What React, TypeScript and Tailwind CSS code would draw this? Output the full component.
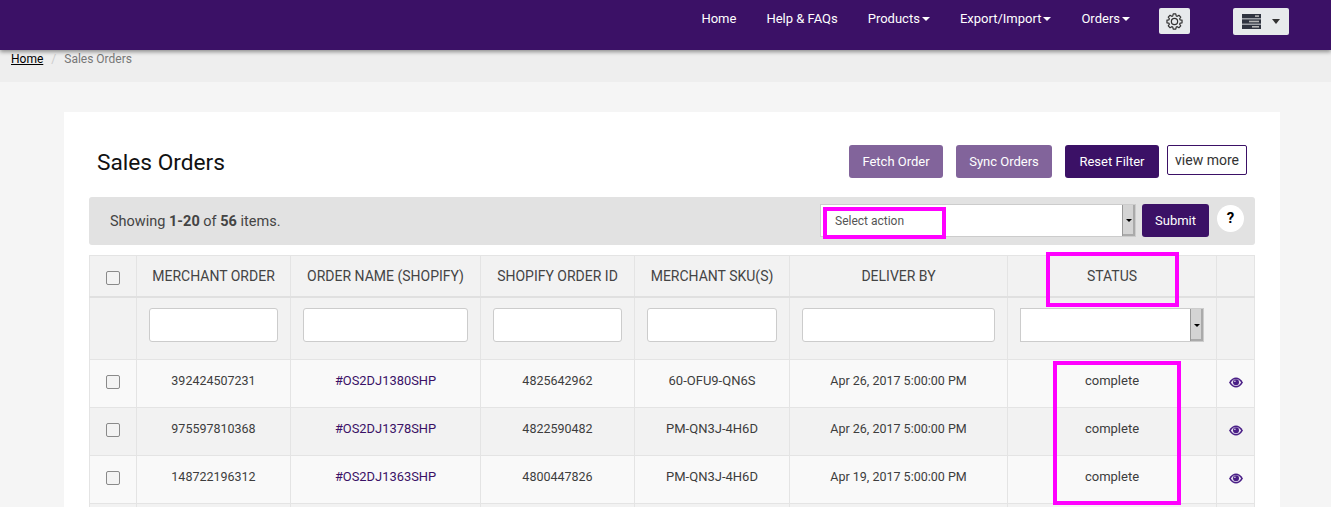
const orders = [
  { merchant: "392424507231", name: "#OS2DJ1380SHP", shopify: "4825642962", sku: "60-OFU9-QN6S", deliver: "Apr 26, 2017 5:00:00 PM" },
  { merchant: "975597810368", name: "#OS2DJ1378SHP", shopify: "4822590482", sku: "PM-QN3J-4H6D", deliver: "Apr 26, 2017 5:00:00 PM" },
  { merchant: "148722196312", name: "#OS2DJ1363SHP", shopify: "4800447826", sku: "PM-QN3J-4H6D", deliver: "Apr 19, 2017 5:00:00 PM" },
];

const headers = ["MERCHANT ORDER", "ORDER NAME (SHOPIFY)", "SHOPIFY ORDER ID", "MERCHANT SKU(S)", "DELIVER BY"];

function Caret() {
  return <span className="ml-[2px] inline-block h-0 w-0 border-x-4 border-t-4 border-x-transparent border-t-white align-middle" />;
}

function Checkbox() {
  return <span className="mx-auto block h-[14px] w-[14px] rounded-[2px] border border-[#8a8a8a] bg-[#f3f3f3]" />;
}

function SelectArrow() {
  return (
    <span className="flex h-full w-[13px] items-center justify-center border-l border-[#999] bg-[#d4d4d4] shadow-[inset_-2px_-2px_0_#aaa]">
      <span className="h-0 w-0 border-x-[3px] border-t-[3px] border-x-transparent border-t-black" />
    </span>
  );
}

function GearIcon() {
  // 8 tooth cog outline
  const pts: string[] = [];
  for (let i = 0; i < 8; i++) {
    const a = (i * Math.PI) / 4;
    for (const [r, d] of [[8.2, -0.3], [10.8, -0.17], [10.8, 0.17], [8.2, 0.3]]) {
      pts.push(`${(12 + r * Math.sin(a + d)).toFixed(2)},${(12 - r * Math.cos(a + d)).toFixed(2)}`);
    }
  }
  return (
    <svg width="17" height="17" viewBox="0 0 24 24" fill="none" stroke="#333" strokeWidth="1.7" strokeLinejoin="round">
      <polygon points={pts.join(" ")} />
      <circle cx="12" cy="12" r="4.4" />
    </svg>
  );
}

function ServerIcon() {
  return (
    <svg width="19" height="15" viewBox="0 0 19 15">
      <rect x="0" y="0" width="19" height="4.4" fill="#2f3440" />
      <rect x="0" y="5.3" width="19" height="4.4" fill="#2f3440" />
      <rect x="0" y="10.6" width="19" height="4.4" fill="#2f3440" />
      <rect x="13" y="1.3" width="4" height="1.6" fill="#b5b5b5" />
      <rect x="7" y="6.7" width="10" height="1.6" fill="#b5b5b5" />
      <rect x="10" y="12" width="7" height="1.6" fill="#b5b5b5" />
    </svg>
  );
}

function EyeIcon() {
  return (
    <svg width="14" height="11" viewBox="0 0 14 11" className="mx-auto block">
      <path d="M0 5.5C2 2 4.5.5 7 .5s5 1.5 7 5c-2 3.5-4.5 5-7 5s-5-1.5-7-5z" fill="#4a1f86" />
      <path d="M1.8 5.5C3.3 3.1 5 2 7 2s3.7 1.1 5.2 3.5C10.7 7.9 9 9 7 9S3.3 7.9 1.8 5.5z" fill="#e8e2f0" />
      <circle cx="7" cy="5.3" r="3" fill="#4a1f86" />
      <circle cx="5.9" cy="4.3" r="0.8" fill="#e8e2f0" />
    </svg>
  );
}

export default function App() {
  return (
    <div className="relative h-screen overflow-hidden bg-[#f5f5f5] font-['Roboto',sans-serif] text-[13px] text-[#3d3d3d]">
      {/* Top navigation */}
      <nav className="relative z-10 flex h-[50px] items-start justify-end bg-[#3b1166] pr-[42px] text-white shadow-[0_2px_4px_rgba(0,0,0,0.4)]">
        <div className="flex h-[37px] items-center gap-[30px]">
          <a>Home</a>
          <a>Help &amp; FAQs</a>
          <a>Products<Caret /></a>
          <a>Export/Import<Caret /></a>
          <a>Orders<Caret /></a>
        </div>
        <button className="mt-2 ml-[29px] flex h-[26px] w-[31px] items-center justify-center rounded-[2px] bg-[#e7eaec]">
          <GearIcon />
        </button>
        <button className="mt-2 ml-[43px] flex h-[27px] w-[56px] items-center gap-[11px] rounded-[2px] bg-[#e7eaec] pl-[9px]">
          <ServerIcon />
          <span className="h-0 w-0 border-x-[4px] border-t-[5px] border-x-transparent border-t-[#333]" />
        </button>
      </nav>

      {/* Breadcrumb */}
      <div className="flex h-[32px] items-start bg-[#eeeeee] pt-[1px] pl-[11px] text-[12px] leading-[17px]">
        <a className="text-black underline">Home</a>
        <span className="mx-[8px] text-[#ccc]">/</span>
        <span className="text-[#777]">Sales Orders</span>
      </div>

      {/* Card */}
      <main className="mx-[64px] mt-[30px] w-[1216px] bg-white px-[25px]">
        <div className="flex h-[85px] items-start justify-between pt-[33px]">
          <h1 className="pt-[1px] pl-2 text-[22.7px] leading-[34px] text-[#111]">Sales Orders</h1>
          <div className="flex items-start pr-2">
            <button className="h-[33px] w-[94px] rounded-[3px] bg-[#82649b] text-white">Fetch Order</button>
            <button className="ml-[13px] h-[33px] w-[96px] rounded-[3px] bg-[#82649b] text-white">Sync Orders</button>
            <button className="ml-[13px] h-[33px] w-[94px] rounded-[3px] bg-[#3b1166] text-white">Reset Filter</button>
            <button className="ml-2 h-[30px] w-[80px] rounded-[2px] border border-[#3b1166] bg-white text-[14px] text-[#333]">view more</button>
          </div>
        </div>

        {/* Bulk action bar */}
        <div className="flex h-[48px] items-center rounded-[3px] bg-[#e2e2e2] pr-[11px] pl-[21px]">
          <p className="flex-1 pt-[2px] text-[14.5px] text-[#444]">
            Showing <b className="font-bold">1-20</b> of <b className="font-bold">56</b> items.
          </p>
          <div className="mb-[2px] flex h-[33px] w-[316px] items-stretch border border-[#ccc] bg-white pl-[14px] text-[12px] text-[#555]">
            <span className="flex-1 self-center pt-[2px]">Select action</span>
            <SelectArrow />
          </div>
          <button className="mb-[2px] ml-[6px] h-[33px] w-[67px] rounded-[3px] bg-[#3b1166] pt-[2px] text-white">Submit</button>
          <span className="mb-[6px] ml-2 flex h-[27px] w-[27px] items-center justify-center rounded-full bg-white text-[15px] font-bold text-black">?</span>
        </div>

        {/* Orders table */}
        <table className="mt-[10px] w-[1165px] table-fixed border-collapse border border-[#e4e4e4]">
          <colgroup>
            <col className="w-[47px]" />
            <col className="w-[154px]" />
            <col className="w-[190px]" />
            <col className="w-[154px]" />
            <col className="w-[155px]" />
            <col className="w-[218px]" />
            <col className="w-[209px]" />
            <col className="w-[38px]" />
          </colgroup>
          <thead>
            <tr className="h-[41px] border-b-2 border-[#e0e0e0] bg-[#f2f2f2] text-[14px]">
              <th className="border border-b-2 border-[#e4e4e4] border-b-[#e0e0e0] pt-[5px]"><Checkbox /></th>
              {headers.map((h) => (
                <th key={h} className="border border-b-2 border-[#e4e4e4] border-b-[#e0e0e0] pt-[1px] font-normal text-[#444]">{h}</th>
              ))}
              <th className="border border-b-2 border-[#e4e4e4] border-b-[#e0e0e0] pt-[1px] font-normal text-[#444]">STATUS</th>
              <th className="border border-b-2 border-[#e4e4e4] border-b-[#e0e0e0]" />
            </tr>
            <tr className="h-[63px] bg-[#f2f2f2]">
              <td className="border border-[#e4e4e4]" />
              {headers.map((h) => (
                <td key={h} className="border border-[#e4e4e4] px-3 pb-[6px]">
                  <span className="block h-[34px] rounded-[3px] border border-[#ccc] bg-white" />
                </td>
              ))}
              <td className="border border-[#e4e4e4] px-3 pb-[6px]">
                <span className="flex h-[34px] w-[184px] justify-end border border-[#ccc] bg-white"><SelectArrow /></span>
              </td>
              <td className="border border-[#e4e4e4]" />
            </tr>
          </thead>
          <tbody>
            {orders.map((o, i) => (
              <tr key={o.name} className={`h-[48px] text-center ${i % 2 === 0 ? "bg-[#f9f9f9]" : "bg-[#f2f2f2]"}`}>
                <td className="border border-[#e4e4e4] pb-[3px]"><Checkbox /></td>
                <td className="border border-[#e4e4e4] pb-[5px] text-[12.5px]">{o.merchant}</td>
                <td className="border border-[#e4e4e4] pb-[5px] text-[12.9px] text-[#3b1166]">{o.name}</td>
                <td className="border border-[#e4e4e4] pb-[5px] text-[12.5px]">{o.shopify}</td>
                <td className="border border-[#e4e4e4] pb-[5px]">{o.sku}</td>
                <td className="border border-[#e4e4e4] pb-[5px] text-[12.5px]">{o.deliver}</td>
                <td className="border border-[#e4e4e4] pb-[5px]">complete</td>
                <td className="border border-[#e4e4e4] pb-[2px]"><EyeIcon /></td>
              </tr>
            ))}
            <tr className="h-[48px] bg-[#f2f2f2]">
              {[0, 1, 2, 3, 4, 5, 6, 7].map((n) => (
                <td key={n} className="border border-[#e4e4e4]" />
              ))}
            </tr>
          </tbody>
        </table>
      </main>

      {/* Magenta annotations drawn over the screenshot */}
      <div className="absolute top-[207px] left-[823px] h-[32px] w-[123px] border-4 border-[#ff00ff]" />
      <div className="absolute top-[252px] left-[1046px] h-[55px] w-[133px] border-4 border-[#ff00ff]" />
      <div className="absolute top-[361px] left-[1053px] h-[144px] w-[128px] border-4 border-[#ff00ff]" />
    </div>
  );
}
